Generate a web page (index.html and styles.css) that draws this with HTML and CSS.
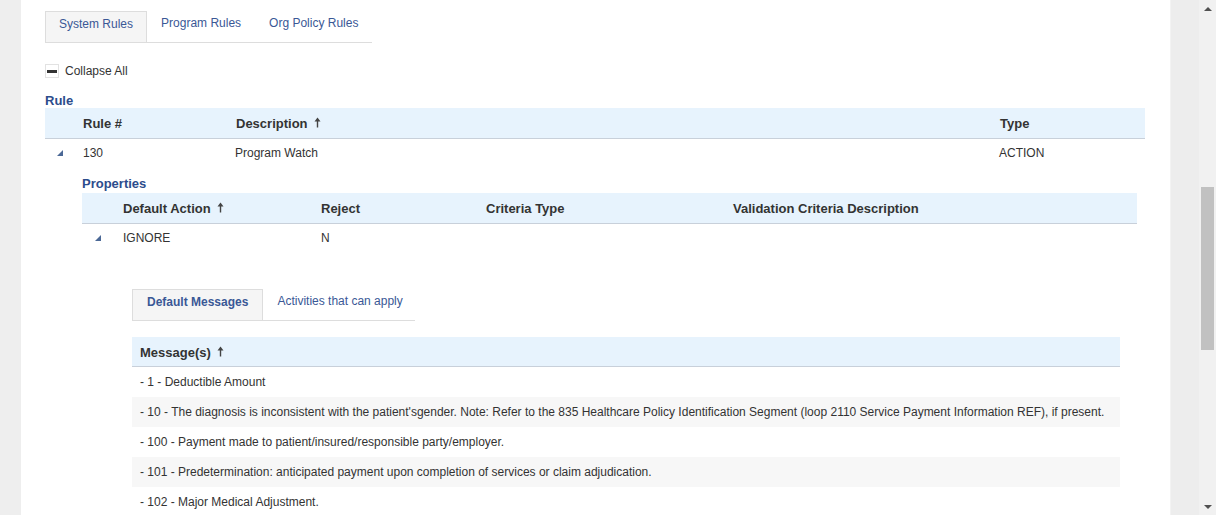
FILE: index.html
```html
<!DOCTYPE html>
<html>
<head>
<meta charset="utf-8">
<link rel="stylesheet" href="styles.css">
</head>
<body>
<div class="page">
  <div class="gutter-left"></div>
  <main class="panel">
    <ul class="tabs">
      <li class="tab active">System Rules</li>
      <li class="tab">Program Rules</li>
      <li class="tab">Org Policy Rules</li>
    </ul>

    <div class="collapse">
      <span class="collapse-box"><span class="collapse-bar"></span></span>
      <span>Collapse All</span>
    </div>

    <div class="section-title">Rule</div>
    <table class="grid grid-rule">
      <colgroup>
        <col class="c-exp30"><col class="c-153"><col class="c-764"><col class="c-153">
      </colgroup>
      <thead>
        <tr>
          <th></th>
          <th>Rule #</th>
          <th>Description <svg class="sort" width="7" height="11" viewBox="0 0 7 11"><path d="M3.5 0.5 L6.5 4.5 L4.2 4.5 L4.2 10.5 L2.8 10.5 L2.8 4.5 L0.5 4.5 Z" fill="#444"/></svg></th>
          <th>Type</th>
        </tr>
      </thead>
      <tbody>
        <tr>
          <td class="exp"><svg width="6" height="6" viewBox="0 0 6 6"><polygon points="6,0 6,6 0,6" fill="#4b6896"/></svg></td>
          <td>130</td>
          <td class="desc">Program Watch</td>
          <td class="desc">ACTION</td>
        </tr>
      </tbody>
    </table>

    <div class="nested">
      <div class="section-title sub">Properties</div>
      <table class="grid grid-props">
        <colgroup>
          <col class="c-exp33"><col class="c-198"><col class="c-165"><col class="c-247"><col>
        </colgroup>
        <thead>
          <tr>
            <th></th>
            <th>Default Action <svg class="sort" width="7" height="11" viewBox="0 0 7 11"><path d="M3.5 0.5 L6.5 4.5 L4.2 4.5 L4.2 10.5 L2.8 10.5 L2.8 4.5 L0.5 4.5 Z" fill="#444"/></svg></th>
            <th>Reject</th>
            <th>Criteria Type</th>
            <th>Validation Criteria Description</th>
          </tr>
        </thead>
        <tbody>
          <tr>
            <td class="exp"><svg width="6" height="6" viewBox="0 0 6 6"><polygon points="6,0 6,6 0,6" fill="#4b6896"/></svg></td>
            <td>IGNORE</td>
            <td>N</td>
            <td></td>
            <td></td>
          </tr>
        </tbody>
      </table>

      <div class="detail">
        <ul class="tabs inner">
          <li class="tab active bold">Default Messages</li>
          <li class="tab">Activities that can apply</li>
        </ul>

        <table class="grid grid-msg">
          <thead>
            <tr><th>Message(s) <svg class="sort" width="7" height="11" viewBox="0 0 7 11"><path d="M3.5 0.5 L6.5 4.5 L4.2 4.5 L4.2 10.5 L2.8 10.5 L2.8 4.5 L0.5 4.5 Z" fill="#444"/></svg></th></tr>
          </thead>
          <tbody>
            <tr><td>- 1 - Deductible Amount</td></tr>
            <tr class="alt"><td>- 10 - The diagnosis is inconsistent with the patient'sgender. Note: Refer to the 835 Healthcare Policy Identification Segment (loop 2110 Service Payment Information REF), if present.</td></tr>
            <tr><td>- 100 - Payment made to patient/insured/responsible party/employer.</td></tr>
            <tr class="alt"><td>- 101 - Predetermination: anticipated payment upon completion of services or claim adjudication.</td></tr>
            <tr><td>- 102 - Major Medical Adjustment.</td></tr>
          </tbody>
        </table>
      </div>
    </div>
  </main>
  <div class="gutter-right"></div>
  <div class="scrollbar">
    <div class="sb-arrow up"></div>
    <div class="sb-track"><div class="sb-thumb"></div></div>
    <div class="sb-arrow down"></div>
  </div>
</div>
</body>
</html>
```

FILE: styles.css
```css
html, body {
  margin: 0;
  padding: 0;
  height: 515px;
  overflow: hidden;
}
body {
  font-family: "Liberation Sans", Arial, sans-serif;
  font-size: 12px;
  color: #333;
  background: #eeeeee;
}
.page {
  display: flex;
  height: 515px;
}
.gutter-left {
  width: 21px;
  flex: none;
  background: #eeeeee;
}
.panel {
  width: 1149px;
  flex: none;
  background: #fff;
  box-sizing: border-box;
  padding: 11px 25px 0 24px;
  overflow: hidden;
}
.gutter-right {
  width: 29px;
  flex: none;
  background: #ededed;
  border-left: 1px solid #f3f3f3;
  box-sizing: border-box;
}
.scrollbar {
  width: 17px;
  flex: none;
  background: #f1f1f1;
  display: flex;
  flex-direction: column;
}
.sb-arrow {
  height: 17px;
  flex: none;
  display: flex;
  align-items: center;
  justify-content: center;
}
.sb-arrow.up::before {
  content: "";
  border-left: 4px solid transparent;
  border-right: 4px solid transparent;
  border-bottom: 4px solid #505050;
}
.sb-arrow.down::before {
  content: "";
  border-left: 4px solid transparent;
  border-right: 4px solid transparent;
  border-top: 4px solid #505050;
}
.sb-track {
  flex: 1;
  padding-top: 170px;
}
.sb-thumb {
  margin: 0 2px;
  height: 163px;
  background: #c1c1c1;
}

/* tabs */
.tabs {
  list-style: none;
  margin: 0;
  padding: 0;
  display: flex;
  width: 327px;
  border-bottom: 1px solid #dddddd;
}
.tab {
  height: 30px;
  line-height: 23px;
  padding: 0 13px;
  border: 1px solid transparent;
  border-bottom: none;
  color: #3a5896;
  white-space: nowrap;
}
.tab.active {
  background: #f5f5f5;
  border-color: #dddddd;
  line-height: 25px;
}
.tab.bold {
  font-weight: bold;
  padding: 0 14px;
}
.tabs.inner {
  width: 283px;
}
.tabs.inner .tab {
  line-height: 22px;
}
.tabs.inner .tab.active {
  line-height: 24px;
}

/* collapse */
.collapse {
  margin-top: 21px;
  display: flex;
  align-items: center;
  gap: 6px;
  height: 14px;
}
.collapse-box {
  width: 12px;
  height: 12px;
  border: 1px solid #e2e2e2;
  display: flex;
  align-items: center;
  justify-content: center;
}
.collapse-bar {
  width: 10px;
  height: 3px;
  background: #333;
}

.section-title {
  margin-top: 14px;
  padding-top: 1px;
  font-size: 13px;
  font-weight: bold;
  line-height: 15px;
  color: #2c4c8c;
}
.section-title.sub {
  margin-top: 8px;
  margin-bottom: 2px;
}

/* tables */
.grid {
  width: 100%;
  border-collapse: collapse;
  table-layout: fixed;
}
.grid th {
  background: #e7f3fd;
  border-bottom: 1px solid #c8d0da;
  height: 30px;
  padding: 0 8px;
  text-align: left;
  font-size: 13px;
  font-weight: bold;
  color: #333;
  white-space: nowrap;
}
.grid td {
  height: 28px;
  padding: 0 8px;
  color: #333;
  white-space: nowrap;
}
.grid td.desc {
  padding-left: 7px;
}
.grid th:first-child,
.grid td.exp {
  padding: 0;
}
.grid td.exp {
  padding-left: 12px;
}
.grid td.exp svg {
  display: block;
}
.sort {
  margin-left: 3px;
  vertical-align: 0;
}
.c-exp30 { width: 30px; }
.c-exp33 { width: 33px; }
.c-153 { width: 153px; }
.c-764 { width: 764px; }
.c-198 { width: 198px; }
.c-165 { width: 165px; }
.c-247 { width: 247px; }

.grid-props td.exp {
  padding-left: 13px;
}

.nested {
  margin: 0 8px 0 37px;
}
.detail {
  margin: 37px 17px 0 50px;
}
.grid-msg {
  margin-top: 16px;
}
.grid-msg th,
.grid-msg th:first-child {
  height: 28px;
  padding: 1px 8px 0;
}
.grid-msg td {
  height: 30px;
}
.grid-msg tr.alt td {
  background: #f7f7f7;
}
```
